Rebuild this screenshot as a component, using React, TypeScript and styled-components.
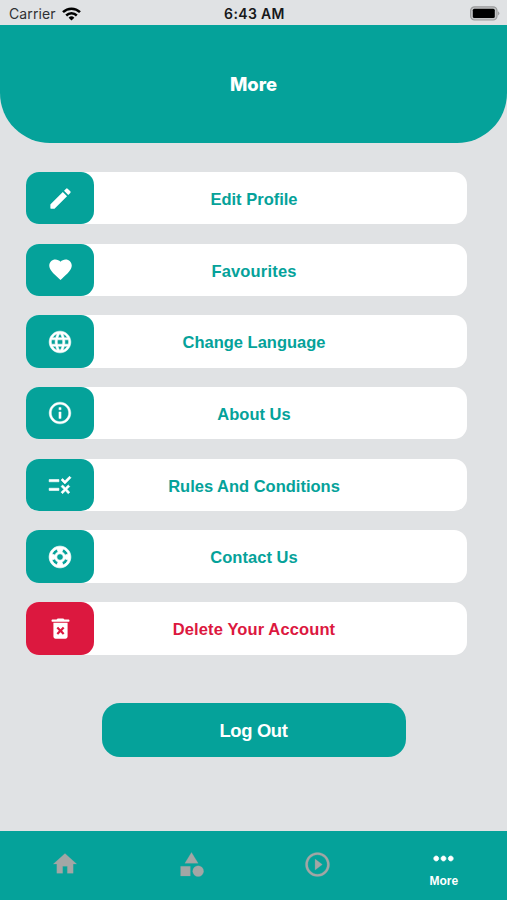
import React from "react";
import styled, { createGlobalStyle } from "styled-components";
import {
  MdCategory,
  MdFavorite,
  MdHome,
  MdInfoOutline,
  MdLanguage,
  MdMoreHoriz,
  MdPlayCircleOutline,
  MdRule,
  MdSupport,
} from "react-icons/md";

const teal = "#05a29a";
const crimson = "#dc183f";

const GlobalStyle = createGlobalStyle`
  * { box-sizing: border-box; }
  body {
    margin: 0;
    background: #e0e2e4;
    font-family: "Liberation Sans", Arial, sans-serif;
  }
`;

const Screen = styled.div`
  display: flex;
  flex-direction: column;
  height: 900px;
  overflow: hidden;
`;

const StatusBar = styled.div`
  display: grid;
  grid-template-columns: 1fr auto 1fr;
  align-items: center;
  height: 25px;
  padding: 2px 7px 0 9px;
  color: #17181a;
  font: 400 14px/20px Inter, sans-serif;
`;

const Carrier = styled.div`
  display: flex;
  align-items: center;
  gap: 6px;
  color: #303133;
  letter-spacing: 0.1px;
`;

const Clock = styled.div`
  font-weight: 600;
  font-size: 14px;
  letter-spacing: 0.36px;
`;

const BatteryIcon = styled.svg`
  justify-self: end;
  margin-top: -1px;
`;

const Header = styled.header`
  display: flex;
  align-items: center;
  justify-content: center;
  height: 117.5px;
  padding-top: 1px;
  border-radius: 0 0 50px 50px;
  background: ${teal};
`;

const Title = styled.h1`
  margin: 0;
  color: #fff;
  font: 800 18.4px/24px Inter, sans-serif;
`;

const Menu = styled.nav`
  display: flex;
  flex-direction: column;
  gap: 19.2px;
  padding: 29.4px 40px 0 26px;
`;

const MenuItem = styled.button<{ $color: string }>`
  display: flex;
  align-items: stretch;
  width: 441px;
  height: 52.5px;
  padding: 0;
  border: 0;
  border-radius: 13px;
  background: #fff;
  color: ${(p) => p.$color};
  font: 700 16.5px/24px "Liberation Sans", Arial, sans-serif;
`;

const Tile = styled.span<{ $color: string; $weight: number }>`
  display: flex;
  align-items: center;
  justify-content: center;
  width: 68px;
  border-radius: 13px;
  background: ${(p) => p.$color};
  color: #fff;

  svg {
    stroke-width: ${(p) => p.$weight};
    stroke-linejoin: round;
  }

  path[fill="none"] {
    stroke: none;
  }
`;

const ItemLabel = styled.span<{ $spacing: number }>`
  flex: 1;
  align-self: center;
  padding: 1.4px 53px 0 0;
  letter-spacing: ${(p) => p.$spacing}px;
  white-space: nowrap;
`;

const LogOutButton = styled.button`
  align-self: center;
  width: 304px;
  height: 54px;
  margin-top: 48.5px;
  padding: 2px 0 0;
  border: 0;
  border-radius: 18px;
  background: ${teal};
  color: #fff;
  font: 700 18.4px/24px "Liberation Sans", Arial, sans-serif;
  letter-spacing: -0.35px;
`;

const TabBar = styled.nav`
  display: grid;
  grid-template-columns: repeat(4, 126.4px);
  height: 69px;
  margin-top: auto;
  background: ${teal};
`;

const Tab = styled.button<{ $active?: boolean }>`
  display: flex;
  flex-direction: column;
  align-items: center;
  gap: 1px;
  padding: ${(p) => (p.$active ? "13px" : "19px")} 0 0 3px;
  border: 0;
  background: none;
  color: ${(p) => (p.$active ? "#fff" : "#a3a6a5")};
  font: 700 12px/14px "Liberation Sans", Arial, sans-serif;

  svg {
    stroke-width: ${(p) => (p.$active ? 0.7 : 0.2)};
  }

  path[fill="none"] {
    stroke: none;
  }
`;

interface IconProps {
  size: number;
}

const Pencil = ({ size }: IconProps) => (
  <svg width={size} height={size} viewBox="0 0 24 24" fill="currentColor">
    <path d="M3 17.46v3.04c0 .28.22.5.5.5h3.04c.13 0 .26-.05.35-.15L17.81 9.94l-3.75-3.75L3.15 17.1c-.1.1-.15.22-.15.36zM20.71 7.04a.996.996 0 0 0 0-1.41l-2.34-2.34a.996.996 0 0 0-1.41 0l-1.83 1.83 3.75 3.75 1.83-1.83z" />
  </svg>
);

const Trash = ({ size }: IconProps) => (
  <svg width={size} height={size} viewBox="0 0 24 24" fill="currentColor">
    <path d="M15.5 4l-.71-.71c-.18-.18-.44-.29-.7-.29H9.91c-.26 0-.52.11-.7.29L8.5 4H5c-.55 0-1 .45-1 1s.45 1 1 1h14c.55 0 1-.45 1-1s-.45-1-1-1h-3.5z" />
    <path
      fillRule="evenodd"
      d="M5.7 19.2c0 1.1.8 1.9 1.9 1.9h8.8c1.1 0 1.9-.8 1.9-1.9V6.8H5.7zm2.76-7.32 1.41-1.41L12 12.59l2.12-2.12 1.41 1.41L13.41 14l2.12 2.12-1.41 1.41L12 15.41l-2.12 2.12-1.41-1.41L10.59 14z"
    />
  </svg>
);

interface Entry {
  label: string;
  icon: React.ComponentType<IconProps>;
  size?: number;
  spacing: number;
  weight?: number;
  color?: string;
}

const entries: Entry[] = [
  { label: "Edit Profile", icon: Pencil, spacing: 0 },
  { label: "Favourites", icon: MdFavorite, spacing: 0.18 },
  { label: "Change Language", icon: MdLanguage, spacing: 0, size: 26, weight: 0.5 },
  { label: "About Us", icon: MdInfoOutline, spacing: 0, size: 26, weight: 0.4 },
  { label: "Rules And Conditions", icon: MdRule, spacing: 0, size: 26, weight: 0.6 },
  { label: "Contact Us", icon: MdSupport, spacing: 0.05, size: 26, weight: 0.7 },
  { label: "Delete Your Account", icon: Trash, spacing: 0.12, color: crimson },
];

const Wifi = () => (
  <svg width="19" height="14" viewBox="0 0 19 14" fill="none" stroke="#000" strokeWidth="2.5">
    <path d="M1 5.2a12.2 12.2 0 0 1 17 0" />
    <path d="M4.2 8.5a7.6 7.6 0 0 1 10.6 0" />
    <path d="M9.5 13.6 6.6 10.7a4.1 4.1 0 0 1 5.8 0z" fill="#000" stroke="none" />
  </svg>
);

const Battery = () => (
  <BatteryIcon width="31" height="15" viewBox="0 0 31 15">
    <rect x="1.6" y="0.8" width="26.4" height="13.2" rx="4" fill="#c4c5c6" stroke="#9a9b9c" strokeWidth="1.2" />
    <rect x="3.8" y="2.8" width="22" height="9.2" rx="1.5" fill="#000" />
    <path d="M29.1 5.2q2.5 2.2 0 4.4z" fill="#97989a" />
  </BatteryIcon>
);

export default function App() {
  return (
    <>
      <GlobalStyle />
      <Screen>
        <StatusBar>
          <Carrier>
            Carrier
            <Wifi />
          </Carrier>
          <Clock>6:43 AM</Clock>
          <Battery />
        </StatusBar>
        <Header>
          <Title>More</Title>
        </Header>
        <Menu>
          {entries.map(({ label, icon: Icon, size = 27, spacing, weight = 0, color = teal }) => (
            <MenuItem key={label} $color={color}>
              <Tile $color={color} $weight={weight}>
                <Icon size={size} />
              </Tile>
              <ItemLabel $spacing={spacing}>{label}</ItemLabel>
            </MenuItem>
          ))}
        </Menu>
        <LogOutButton>Log Out</LogOutButton>
        <TabBar>
          <Tab aria-label="Home">
            <MdHome size={28} />
          </Tab>
          <Tab aria-label="Categories">
            <MdCategory size={29} />
          </Tab>
          <Tab aria-label="Play">
            <MdPlayCircleOutline size={29} />
          </Tab>
          <Tab $active>
            <MdMoreHoriz size={29} />
            More
          </Tab>
        </TabBar>
      </Screen>
    </>
  );
}
